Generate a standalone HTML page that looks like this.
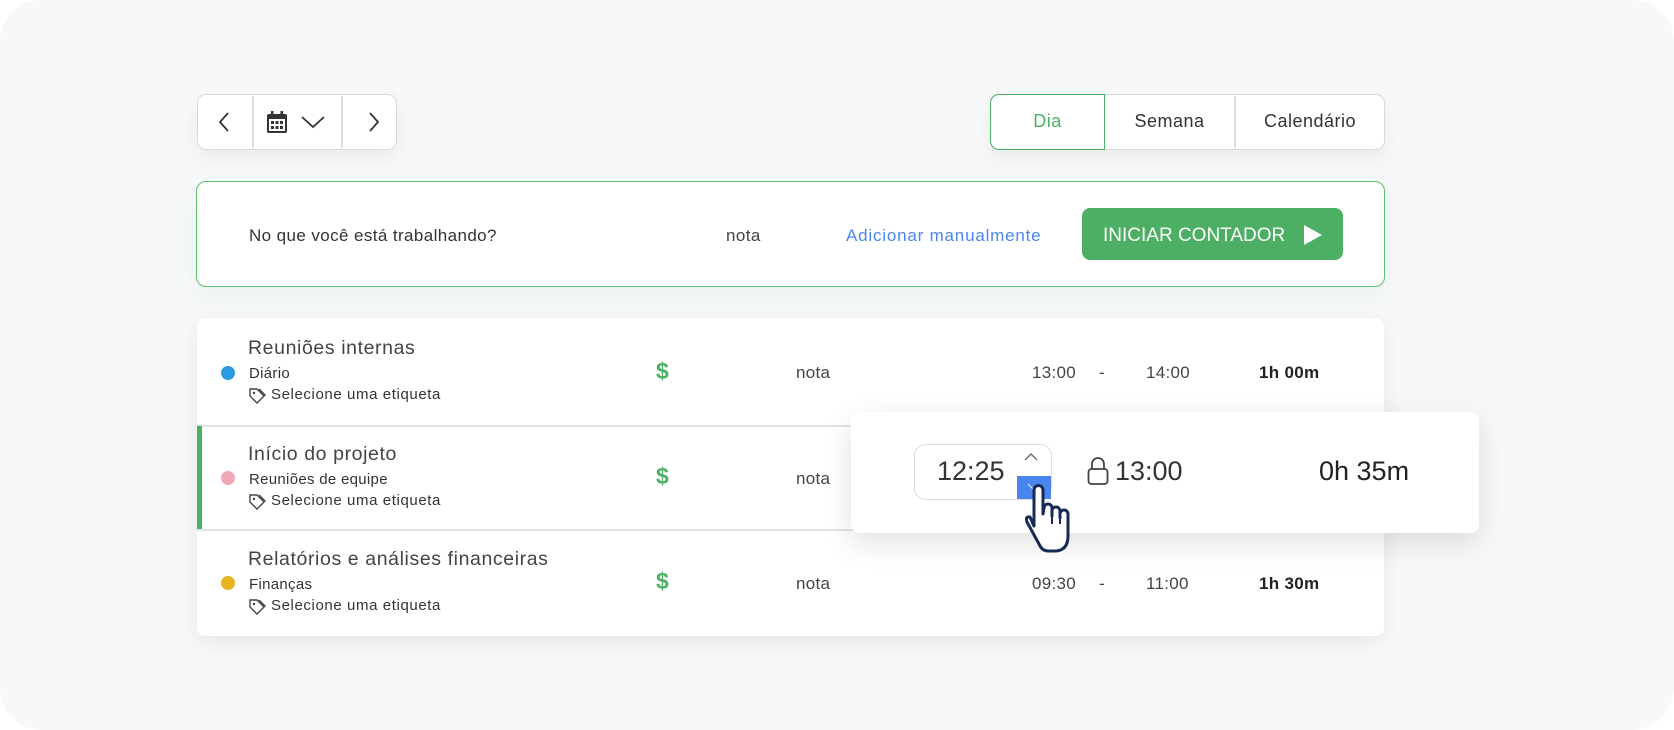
<!DOCTYPE html>
<html><head><meta charset="utf-8"><style>
body{margin:0;width:1674px;height:730px;background:#fff;font-family:"Liberation Sans",sans-serif;position:relative;overflow:hidden;color:#333}
.a{position:absolute}
.bg{left:0;top:0;width:1674px;height:730px;background:#f7f8fa;border-radius:42px}
.box{background:#fff;border:1.5px solid #d9d9d9;border-radius:9px;box-sizing:border-box;box-shadow:0 8px 20px rgba(0,0,0,.06)}
.t{white-space:nowrap}
.title{font-size:19.5px;color:#444;letter-spacing:.6px}
.sub{font-size:15px;color:#333;letter-spacing:.3px}
.tag{font-size:15px;color:#333;letter-spacing:.6px}
.dot{width:14px;height:14px;border-radius:50%}
.dol{font-size:23px;color:#4caf63;font-weight:bold}
.mid{font-size:17px;color:#444;letter-spacing:.3px}
</style></head><body>
<div class="a bg"></div>
<!-- nav -->
<div class="a box" style="left:197px;top:94px;width:200px;height:56px"></div>
<div class="a" style="left:252px;top:96px;width:1.5px;height:52px;background:#ddd"></div>
<div class="a" style="left:341px;top:96px;width:1.5px;height:52px;background:#ddd"></div>
<svg class="a" style="left:216px;top:110px" width="16" height="24"><path d="M12 3 L4 12 L12 21" stroke="#333" stroke-width="1.8" fill="none"/></svg>
<svg class="a" style="left:366px;top:110px" width="16" height="24"><path d="M4 3 L12 12 L4 21" stroke="#333" stroke-width="1.8" fill="none"/></svg>
<svg class="a" style="left:266px;top:110px" width="22" height="24"><rect x="1" y="4" width="20" height="19" rx="2" fill="#333"/><rect x="5" y="1" width="2.5" height="5" fill="#333"/><rect x="14.5" y="1" width="2.5" height="5" fill="#333"/><rect x="3" y="9" width="16" height="12" fill="#fff"/><g fill="#333"><rect x="5" y="11" width="3" height="3"/><rect x="9.5" y="11" width="3" height="3"/><rect x="14" y="11" width="3" height="3"/><rect x="5" y="16" width="3" height="3"/><rect x="9.5" y="16" width="3" height="3"/><rect x="14" y="16" width="3" height="3"/></g></svg>
<svg class="a" style="left:300px;top:114px" width="26" height="16"><path d="M2 3 L13 13 L24 3" stroke="#333" stroke-width="1.8" fill="none"/></svg>
<!-- tabs -->
<div class="a box" style="left:990px;top:94px;width:395px;height:56px"></div>
<div class="a" style="left:990px;top:94px;width:115px;height:56px;border:1.5px solid #4caf63;border-radius:9px 0 0 9px;box-sizing:border-box"></div>
<div class="a" style="left:1234px;top:96px;width:1.5px;height:52px;background:#ddd"></div>
<div class="a t" style="left:990px;top:111px;width:115px;text-align:center;font-size:18px;color:#4caf63;letter-spacing:.5px">Dia</div>
<div class="a t" style="left:1105px;top:111px;width:129px;text-align:center;font-size:18px;color:#333;letter-spacing:.5px">Semana</div>
<div class="a t" style="left:1235px;top:111px;width:150px;text-align:center;font-size:18px;color:#333;letter-spacing:.5px">Calendário</div>
<!-- entry bar -->
<div class="a" style="left:196px;top:181px;width:1189px;height:106px;background:#fff;border:1.5px solid #5cc06e;border-radius:10px;box-sizing:border-box;box-shadow:0 8px 22px rgba(76,175,99,.08)"></div>
<div class="a t" style="left:249px;top:226px;font-size:17px;letter-spacing:.4px">No que você está trabalhando?</div>
<div class="a t" style="left:726px;top:226px;font-size:17px;color:#444;letter-spacing:.4px">nota</div>
<div class="a t" style="left:846px;top:226px;font-size:17px;color:#4a86f0;letter-spacing:.8px">Adicionar manualmente</div>
<div class="a" style="left:1082px;top:208px;width:261px;height:52px;background:#4caf63;border-radius:8px"></div>
<div class="a t" style="left:1103px;top:225px;font-size:19px;color:#fff">INICIAR CONTADOR</div>
<svg class="a" style="left:1302px;top:224px" width="22" height="22"><path d="M2 1 L20 11 L2 21Z" fill="#fff"/></svg>
<!-- list -->
<div class="a" style="left:197px;top:318px;width:1187px;height:318px;background:#fff;border-radius:8px;box-shadow:0 6px 20px rgba(0,0,0,.07)"></div>
<div class="a" style="left:197px;top:425px;width:1187px;height:1.5px;background:#e3e3e3"></div>
<div class="a" style="left:197px;top:529px;width:1187px;height:1.5px;background:#e3e3e3"></div>
<div class="a" style="left:197px;top:426px;width:5px;height:103px;background:#4caf63"></div>

<div class="a dot" style="left:221px;top:366px;background:#2d9be0"></div>
<div class="a t title" style="left:248px;top:337px">Reuniões internas</div>
<div class="a t sub" style="left:249px;top:365px">Diário</div>
<div class="a t tag" style="left:271px;top:386px">Selecione uma etiqueta</div>
<div class="a t dol" style="left:656px;top:358px">$</div>
<div class="a t mid" style="left:796px;top:363px">nota</div>
<div class="a t mid" style="left:1032px;top:363px">13:00</div>
<div class="a t mid" style="left:1099px;top:363px">-</div>
<div class="a t mid" style="left:1146px;top:363px">14:00</div>
<div class="a t mid" style="left:1259px;top:363px;font-weight:bold;color:#222">1h 00m</div>

<div class="a dot" style="left:221px;top:471px;background:#f2a7b7"></div>
<div class="a t title" style="left:248px;top:443px">Início do projeto</div>
<div class="a t sub" style="left:249px;top:471px">Reuniões de equipe</div>
<div class="a t tag" style="left:271px;top:492px">Selecione uma etiqueta</div>
<div class="a t dol" style="left:656px;top:463px">$</div>
<div class="a t mid" style="left:796px;top:469px">nota</div>

<div class="a dot" style="left:221px;top:576px;background:#e8b322"></div>
<div class="a t title" style="left:248px;top:548px">Relatórios e análises financeiras</div>
<div class="a t sub" style="left:249px;top:576px">Finanças</div>
<div class="a t tag" style="left:271px;top:597px">Selecione uma etiqueta</div>
<div class="a t dol" style="left:656px;top:568px">$</div>
<div class="a t mid" style="left:796px;top:574px">nota</div>
<div class="a t mid" style="left:1032px;top:574px">09:30</div>
<div class="a t mid" style="left:1099px;top:574px">-</div>
<div class="a t mid" style="left:1146px;top:574px">11:00</div>
<div class="a t mid" style="left:1259px;top:574px;font-weight:bold;color:#222">1h 30m</div>

<svg class="a" style="left:248px;top:387px" width="18" height="18"><path d="M2 2 H9 L16 9 L9 16 L2 9Z" fill="none" stroke="#444" stroke-width="1.4"/><path d="M11 2 L17.5 8.5" stroke="#444" stroke-width="1.4"/><circle cx="6" cy="6" r="1.2" fill="#444"/></svg>
<svg class="a" style="left:248px;top:493px" width="18" height="18"><path d="M2 2 H9 L16 9 L9 16 L2 9Z" fill="none" stroke="#444" stroke-width="1.4"/><path d="M11 2 L17.5 8.5" stroke="#444" stroke-width="1.4"/><circle cx="6" cy="6" r="1.2" fill="#444"/></svg>
<svg class="a" style="left:248px;top:598px" width="18" height="18"><path d="M2 2 H9 L16 9 L9 16 L2 9Z" fill="none" stroke="#444" stroke-width="1.4"/><path d="M11 2 L17.5 8.5" stroke="#444" stroke-width="1.4"/><circle cx="6" cy="6" r="1.2" fill="#444"/></svg>

<!-- popup -->
<div class="a" style="left:851px;top:412px;width:628px;height:121px;background:#fff;border-radius:8px;box-shadow:0 10px 30px rgba(0,0,0,.12)"></div>
<div class="a" style="left:914px;top:444px;width:138px;height:56px;border:1.5px solid #ddd;border-radius:12px;box-sizing:border-box"></div>
<div class="a t" style="left:937px;top:456px;font-size:27px;color:#333">12:25</div>
<svg class="a" style="left:1022px;top:451px" width="18" height="12"><path d="M3 9 L9 3 L15 9" stroke="#555" stroke-width="1.2" fill="none"/></svg>
<div class="a" style="left:1017px;top:476px;width:34px;height:23px;background:#4a86f0"></div>
<svg class="a" style="left:1025px;top:481px" width="18" height="12"><path d="M3 3 L9 9 L15 3" stroke="#dfe9ff" stroke-width="1.2" fill="none"/></svg>
<svg class="a" style="left:1086px;top:456px" width="24" height="30"><path d="M6 13 V8 a6 6 0 0 1 12 0 V13" stroke="#444" stroke-width="1.8" fill="none"/><rect x="2.5" y="13" width="19" height="15" rx="3" fill="none" stroke="#444" stroke-width="1.8"/></svg>
<div class="a t" style="left:1115px;top:456px;font-size:27px;color:#333">13:00</div>
<div class="a t" style="left:1319px;top:456px;font-size:27px;color:#222">0h 35m</div>
<!-- hand cursor -->
<svg class="a" style="left:1020px;top:480px" width="56" height="75" viewBox="0 0 56 75"><path d="M14 46 L14 10 a4.5 4.5 0 0 1 9 0 V34 L24 28 a4 4 0 0 1 8 0 V36 V31 a4 4 0 0 1 8 0 V38 V34 a4 4 0 0 1 8 0 V56 Q48 70 36 71 H28 Q22 71 19 64 L7 42 Q5 36 10 37 Z" fill="#fff" stroke="#152a55" stroke-width="3" stroke-linejoin="round"/><path d="M32 36 V44 M40 38 V44" stroke="#152a55" stroke-width="2"/></svg>
</body></html>
